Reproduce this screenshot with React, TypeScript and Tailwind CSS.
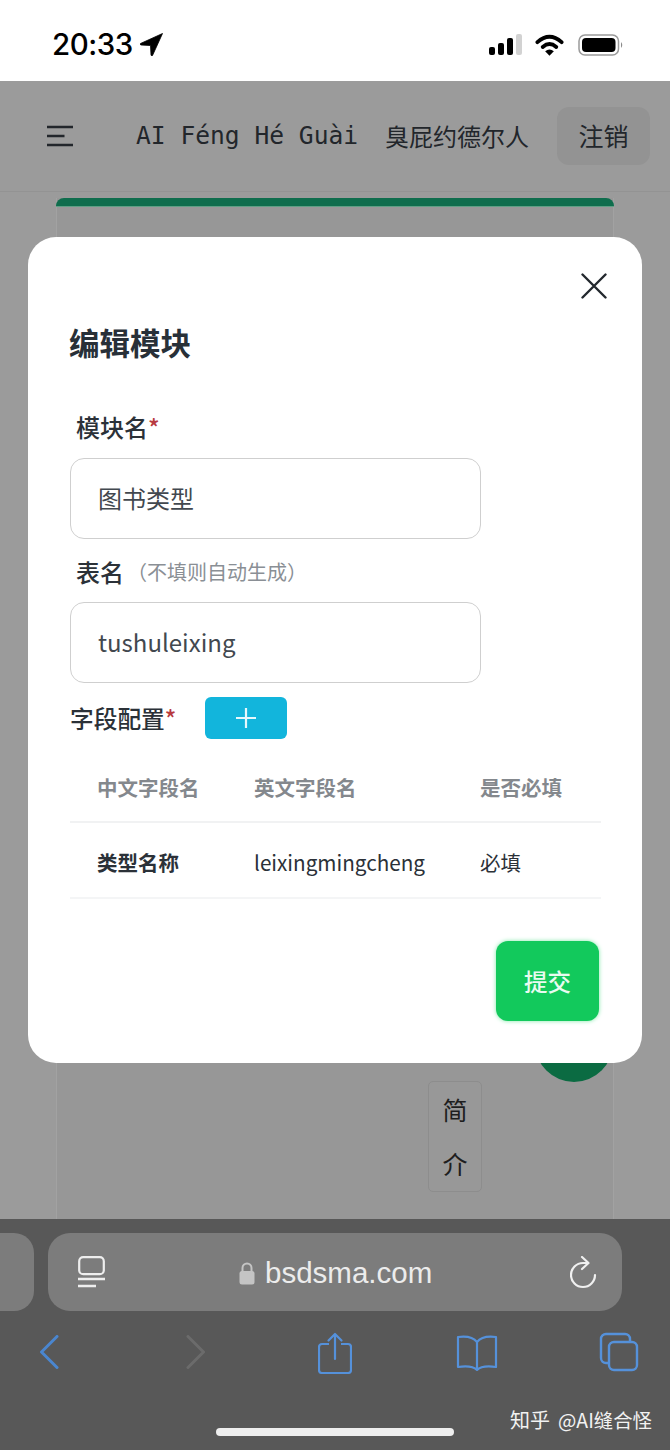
import React from "react";

const cjk = "font-['Noto_Sans_CJK_SC','Noto_Sans',sans-serif]";

function Field({ value }: { value: string }) {
  return (
    <div className="flex h-[81px] w-[411px] items-center rounded-[14px] border-[1.5px] border-[#cfcfcf] pb-[1px] pl-[27px] text-[24px] text-[#42484f]">
      {value}
    </div>
  );
}

function StatusBar() {
  return (
    <div className="flex h-[81px] shrink-0 items-center justify-between bg-white pl-[52px] pr-[46px] pt-[8px] text-black">
      <div className="flex items-center gap-[7px]">
        <span className="font-['Inter',sans-serif] text-[29.5px] font-medium leading-none tracking-[-0.5px]">20:33</span>
        <svg width="23" height="23" viewBox="0 0 23 23">
          <path d="M22.5 .5 L0.5 10.5 Q-0.5 11.5 1 12 L10.5 12.5 L11 22 Q11.5 23.5 12.5 22.5 Z" fill="#000" stroke="#000" strokeWidth="0.8" />
        </svg>
      </div>
      <div className="flex items-center">
        <svg width="33" height="21" viewBox="0 0 33 21">
          <rect x="0" y="13" width="6" height="8" rx="2" fill="#000" />
          <rect x="9" y="9" width="6" height="12" rx="2" fill="#000" />
          <rect x="18" y="4" width="6" height="17" rx="2" fill="#000" />
          <rect x="27" y="0" width="6" height="21" rx="2" fill="#d2d2d2" />
        </svg>
        <svg className="ml-[13px]" width="29" height="22" viewBox="0 0 30 22">
          <path d="M2.5 8 Q15 -3 27.5 8" fill="none" stroke="#000" strokeWidth="4" strokeLinecap="round" />
          <path d="M8 13 Q15 7 22 13" fill="none" stroke="#000" strokeWidth="4" strokeLinecap="round" />
          <path d="M10.5 17.5 Q15 14 19.5 17.5 L15 22 Z" fill="#000" />
        </svg>
        <svg className="ml-[14px]" width="46" height="22" viewBox="0 0 46 22">
          <rect x="1" y="1" width="39.5" height="20" rx="6" fill="none" stroke="#9a9a9a" strokeWidth="1.5" />
          <rect x="4" y="4" width="33.5" height="14" rx="4" fill="#000" />
          <path d="M43 8 Q45.5 11 43 14 Z" fill="#8a8a8a" />
        </svg>
      </div>
    </div>
  );
}

function BackPage() {
  return (
    <div className="flex min-h-0 flex-1 flex-col bg-[#9b9b9b]">
      <div className="flex h-[111px] shrink-0 items-center border-b border-[#939393] pl-[47px] pr-[20px] text-[#22262b]">
        <svg width="27" height="24" viewBox="0 0 27 24">
          <path d="M0 3 H26 M0 12 H17.5 M0 21 H26" stroke="#22262b" strokeWidth="2.6" />
        </svg>
        <span className="ml-[62px] mt-[1px] font-['DejaVu_Sans_Mono',monospace] text-[24.6px] leading-none">AI Féng Hé Guài</span>
        <span className={`ml-[27px] text-[24px] leading-none ${cjk}`}>臭屁约德尔人</span>
        <div className={`ml-auto flex h-[58px] w-[93px] items-center justify-center rounded-[12px] bg-[#939393] text-[25px] ${cjk}`}>注销</div>
      </div>
      <div className="relative mx-[56px] mt-[6px] flex-1 border-x border-[#a2a2a2] bg-[#979797]">
        <div className="-mx-px h-[8px] rounded-t-[8px] bg-[#0f6d4d] shadow-[0_1px_0_#5f9f85]" />
        <div className="absolute left-[478px] top-[780px] h-[104px] w-[78px] rounded-full bg-[#0b6b42]" />
        <div className={`absolute left-[371px] top-[883px] flex h-[111px] w-[54px] flex-col items-center justify-around rounded-[5px] border border-[#8d8d8d] bg-[#989898] text-[25px] text-[#1e1e1e] ${cjk}`}>
          <span>简</span>
          <span>介</span>
        </div>
      </div>
    </div>
  );
}

function Modal() {
  return (
    <div className={`absolute left-[28px] top-[237px] h-[826px] w-[614px] rounded-[28px] bg-white pl-[42px] pr-[42px] pt-[83px] ${cjk}`}>
      <svg className="absolute right-[35px] top-[36px]" width="26" height="26" viewBox="0 0 26 26">
        <path d="M1.5 1.5 L24.5 24.5 M24.5 1.5 L1.5 24.5" stroke="#23282e" strokeWidth="2.4" strokeLinecap="round" />
      </svg>
      <h2 className="-ml-[1px] h-[44px] text-[30.5px] font-semibold leading-[44px] text-[#283038]">编辑模块</h2>
      <div className="mt-[46px] h-[34px] pl-[6px] text-[24px] font-medium leading-[34px] text-[#2b3138]">
        模块名<span className="text-[#b83a40]">*</span>
      </div>
      <div className="mt-[14px]">
        <Field value="图书类型" />
      </div>
      <div className="mt-[16px] flex h-[34px] items-center pl-[6px] text-[24px] font-medium leading-[34px] text-[#2b3138]">
        表名
        <span className="ml-[3px] text-[20px] font-normal text-[#8a8f95]">（不填则自动生成）</span>
      </div>
      <div className="mt-[13px]">
        <Field value="tushuleixing" />
      </div>
      <div className="mt-[14px] flex h-[42px] items-center">
        <div className="mt-[2px] w-[135px] text-[23.7px] font-medium text-[#2b3138]">
          字段配置<span className="text-[#b83a40]">*</span>
        </div>
        <div className="flex h-[42px] w-[82px] items-center justify-center rounded-[6px] bg-[#12b5dc]">
          <svg width="22" height="22" viewBox="0 0 22 22">
            <path d="M11 1 V21 M1 11 H21" stroke="#e6f8fc" strokeWidth="2.2" />
          </svg>
        </div>
      </div>
      <div className="mt-[15px] w-[531px]">
        <div className="grid h-[69px] grid-cols-[184px_226px_1fr] items-center border-b-2 border-[#f1f2f3] text-[20.5px] font-bold text-[#84888d]">
          <span className="pl-[27px]">中文字段名</span>
          <span>英文字段名</span>
          <span>是否必填</span>
        </div>
        <div className="grid h-[76px] grid-cols-[184px_226px_1fr] items-center border-b-2 border-[#f4f5f6] pt-[5px] text-[#2b3138]">
          <span className="pl-[27px] text-[20.5px] font-bold">类型名称</span>
          <span className="text-[20.7px]">leixingmingcheng</span>
          <span className="text-[20.5px]">必填</span>
        </div>
      </div>
      <div className="mt-[42px] flex justify-end pr-[1px]">
        <div className="flex h-[80px] w-[103px] items-center justify-center rounded-[12px] bg-[#12c95c] pt-[2px] text-[23.5px] font-medium text-[#e9fbf0] shadow-[0_0_4px_#7fe8a8]">
          提交
        </div>
      </div>
    </div>
  );
}

function BottomBar() {
  const blue = "#5591da";
  return (
    <div className="relative flex h-[231px] shrink-0 flex-col bg-[#585858]">
      <div className="mt-[14px] flex h-[78px] gap-[14px]">
        <div className="h-full w-[34px] rounded-r-[20px] bg-[#7c7c7c]" />
        <div className="flex h-full w-[574px] items-center rounded-[22px] bg-[#7c7c7c] pl-[30px] pr-[25px]">
          <svg width="27" height="32" viewBox="0 0 27 32">
            <rect x="1.2" y="1.2" width="24.6" height="17" rx="4" fill="none" stroke="#eee" strokeWidth="2.2" />
            <path d="M0 23 H27 M0 30 H18" stroke="#eee" strokeWidth="2.4" />
          </svg>
          <div className="ml-[134px] mt-[1px] flex items-center gap-[10px]">
            <svg width="16" height="24" viewBox="0 0 16 24">
              <path d="M3.5 11 V7 a4.5 4.5 0 0 1 9 0 V11" fill="none" stroke="#c4c4c4" strokeWidth="2" />
              <rect x="0.5" y="10" width="15" height="13.5" rx="2.5" fill="#c4c4c4" />
            </svg>
            <span className="font-['Liberation_Sans',sans-serif] text-[29.5px] leading-none text-[#ececec]">bsdsma.com</span>
          </div>
          <svg className="ml-auto" width="27" height="33" viewBox="0 0 27 33">
            <path d="M25 19 A12 12 0 1 1 13 7 H17" fill="none" stroke="#f0f0f0" strokeWidth="2.2" strokeLinecap="round" />
            <path d="M12 1 L18.5 7 L12 13" fill="none" stroke="#f0f0f0" strokeWidth="2.2" strokeLinecap="round" strokeLinejoin="round" />
          </svg>
        </div>
      </div>
      <div className="mt-[19px] flex items-center pl-[39px]">
        <svg width="20" height="34" viewBox="0 0 20 34">
          <path d="M18 1.5 L2.5 17 L18 32.5" fill="none" stroke="#4a86cf" strokeWidth="3" strokeLinecap="round" strokeLinejoin="round" />
        </svg>
        <svg className="ml-[127px]" width="20" height="34" viewBox="0 0 20 34">
          <path d="M2 1.5 L17.5 17 L2 32.5" fill="none" stroke="#6b6b6b" strokeWidth="3" strokeLinecap="round" strokeLinejoin="round" />
        </svg>
        <svg className="ml-[112px] mt-[2px]" width="34" height="42" viewBox="0 0 34 42">
          <path d="M11 12 H4 a3 3 0 0 0 -3 3 V38 a3 3 0 0 0 3 3 H30 a3 3 0 0 0 3 -3 V15 a3 3 0 0 0 -3 -3 H23" fill="none" stroke={blue} strokeWidth="2.2" />
          <path d="M17 27 V2 M10.5 8.5 L17 2 L23.5 8.5" fill="none" stroke={blue} strokeWidth="2.2" strokeLinecap="round" strokeLinejoin="round" />
        </svg>
        <svg className="ml-[104px] mt-[2px]" width="42" height="36" viewBox="0 0 42 36">
          <path d="M21 7 C17 2 9 1 2 2 V32 C9 31 17 31 21 35 C25 31 33 31 40 32 V2 C33 1 25 2 21 7 Z M21 7 V35" fill="none" stroke={blue} strokeWidth="2.2" strokeLinejoin="round" />
        </svg>
        <svg className="ml-[101px]" width="40" height="40" viewBox="0 0 40 40">
          <rect x="10" y="10" width="28" height="28" rx="5" fill="none" stroke={blue} strokeWidth="2.4" />
          <path d="M10 31 H7 a5 5 0 0 1 -5 -5 V7 a5 5 0 0 1 5 -5 H26 a5 5 0 0 1 5 5 V10" fill="none" stroke={blue} strokeWidth="2.4" />
        </svg>
      </div>
      <div className={`absolute right-[18px] top-[187px] flex items-center gap-[8px] text-[20px] leading-[28px] text-[#f2f2f2] ${cjk}`}>
        <span>知乎</span>
        <span className="text-[19.4px]">@AI缝合怪</span>
      </div>
      <div className="absolute left-[216px] top-[209px] h-[8px] w-[238px] rounded-full bg-[#eeeeee]" />
    </div>
  );
}

export default function App() {
  return (
    <div className={`relative flex h-[1450px] w-[670px] flex-col overflow-hidden bg-white ${cjk}`}>
      <StatusBar />
      <BackPage />
      <BottomBar />
      <Modal />
    </div>
  );
}
